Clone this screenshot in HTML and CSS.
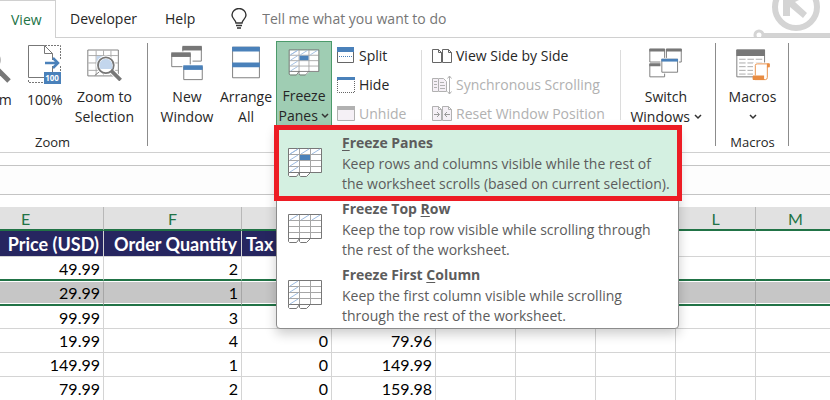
FILE: index.html
```html
<!DOCTYPE html>
<html lang="en">
	<head>
		<meta charset="UTF-8" />
		<meta name="viewport" content="width=device-width, initial-scale=1.0" />
		<title>Freeze Panes</title>
		<link rel="stylesheet" href="styles.css">
	</head>
	<body>
		<!-- shared icon parts -->
		<svg class="defs" width="0" height="0">
			<defs>
				<g id="grid">
					<path fill="#fff" d="M1 1h32v24h-10l-3 3h-7l-2-1-2 1H1z" />
					<path fill="none" stroke="#a6a6a6" d="M1 6.5h32M1 12.5h32M1 18.5h32M11.5 1v24M22.5 1v24" />
					<path fill="none" stroke="#777" d="M.5 .5h33v24H.5zM.5 24.5v3l1 1h7l3-4M11.5 24.5v3l1 1h6l4-4" />
				</g>
				<path id="hatch-row" stroke="#9dbbe0" d="M2 6l8-5M13 6l8-5M24 6l8-5" />
				<path id="hatch-col" stroke="#9dbbe0" d="M2 6l8-5M2 12l8-5M2 18l8-5M2 24l8-5" />
			</defs>
		</svg>

		<header class="tabs">
			<a href="#" class="tab active">View</a>
			<a href="#" class="tab">Developer</a>
			<a href="#" class="tab">Help</a>
			<label class="tell-me">
				<svg width="16" height="22" viewBox="0 0 16 22" fill="none" stroke="#333" stroke-width="1.4">
					<path d="M5 15c0-3-4-4-4-8a7 6.5 0 0 1 14 0c0 4-4 5-4 8zM5 17.5h6M6 20h4" />
				</svg>
				<input type="text" aria-label="Tell me" placeholder="Tell me what you want to do" />
			</label>
			<svg class="backdrop" width="80" height="37" viewBox="0 0 80 37" fill="#d4d4d4">
				<circle cx="46" cy="7" r="21" fill="none" stroke="#d4d4d4" stroke-width="6" />
				<path d="M33 0h16l-4 2 12 11-4 5-13-11v9h-7z" />
				<circle cx="9" cy="35" r="4" fill="none" stroke="#d4d4d4" stroke-width="3" />
				<path d="M14 33h66v4H14z" />
			</svg>
		</header>

		<div class="ribbon">
			<section class="group zoom-group">
				<div class="buttons">
					<button class="big">
						<svg width="40" height="40" viewBox="0 0 40 40" fill="none" stroke="#777">
							<circle cx="14" cy="16" r="12" stroke-width="3" />
							<path stroke-width="5" d="M24 25l12 12" />
						</svg>
						<span>Zoom</span>
					</button>
					<button class="big">
						<svg width="34" height="40" viewBox="0 0 34 40" fill="none">
							<path stroke="#777" stroke-dasharray="2 1" d="M17 1.5h15.500v26M.5 36v2.500h16" />
							<path fill="#fff" stroke="#777" d="M.5 1.500h16l8 8v24H.5zM16.500 1.500v8h8" />
							<path stroke="#fff" stroke-width="6" d="M18 19h15" />
							<path stroke="#4a81ba" stroke-width="2.500" d="M17 19h12M25 14l5 5-5 5" />
							<path fill="#4a81ba" d="M16 28h17v12H16z" />
							<text x="24" y="37" class="icon-text">100</text>
						</svg>
						<span>100%</span>
					</button>
					<button class="big">
						<svg width="38" height="40" viewBox="0 0 38 40" fill="none">
							<path fill="#fff" stroke="#777" d="M1.500 6.500h33v28h-33z" />
							<path stroke="#a6a6a6" d="M2 12.500h32M2 20.500h32M2 28.500h32M10.500 7v27M18.500 7v27M26.500 7v27" />
							<path fill="#c3d6ed" d="M11 13h7v8h-7z" />
							<path stroke="#777" d="M9 34l5-4" />
							<path stroke="#fff" stroke-width="6" d="M27 29l9 9" />
							<circle cx="21" cy="23" r="10.500" fill="#fff" />
							<circle cx="21" cy="23" r="8.500" fill="#fff" stroke="#777" stroke-width="2" />
							<path fill="#c3d6ed" d="M14 23a7 7 0 0 1 14 0v4H15z" />
							<path stroke="#777" stroke-width="4" d="M27 29l10 10" />
						</svg>
						<span>Zoom to<br />Selection</span>
					</button>
				</div>
				<div class="group-name">Zoom</div>
			</section>

			<section class="group window-group">
				<div class="buttons">
					<button class="big">
						<svg width="34" height="40" viewBox="0 0 34 40" fill="#fff">
							<path stroke="#777" d="M12.500 3.500h20v15h-20z" /><path fill="#777" d="M12 2h21v5H12z" />
							<path d="M0 8h23v18H0z" /><path stroke="#777" d="M.5 10.500h20v14H.5z" /><path fill="#777" d="M0 9h21v5H0z" />
							<path d="M12 22h22v18H12z" /><path stroke="#777" d="M13.500 24.500h20v14h-20z" /><path fill="#4a81ba" d="M13 23h21v5H13z" />
						</svg>
						<span>New<br />Window</span>
					</button>
					<button class="big">
						<svg width="30" height="40" viewBox="0 0 30 40">
							<path fill="#fff" stroke="#777" d="M.5 3.500h29v33H.5z" />
							<path fill="#4a81ba" d="M0 3h30v5H0zM0 20h30v5H0z" />
						</svg>
						<span>Arrange<br />All</span>
					</button>
					<div class="dropdown">
						<button class="big open" aria-expanded="true">
							<svg width="34" height="40" viewBox="0 -6 34 40">
								<use href="#grid" /><use href="#hatch-row" /><use href="#hatch-col" />
								<path fill="#4a81ba" d="M12 7h10v5H12z" />
							</svg>
							<span>Freeze<br />Panes <svg class="chevron" width="8" height="6"><path d="M1 1l3 3 3-3" /></svg></span>
						</button>
						<div class="menu" role="menu">
							<button class="menu-item current" role="menuitem">
								<svg width="34" height="30" viewBox="0 0 34 30">
									<use href="#grid" /><use href="#hatch-row" /><use href="#hatch-col" />
									<path fill="#4a81ba" d="M12 7h10v5H12z" />
								</svg>
								<span><strong><u>F</u>reeze Panes</strong>Keep rows and columns visible while the rest of<br />the worksheet scrolls (based on current selection).</span>
							</button>
							<button class="menu-item" role="menuitem">
								<svg width="34" height="30" viewBox="0 0 34 30"><use href="#grid" /><use href="#hatch-row" /></svg>
								<span><strong>Freeze Top <u>R</u>ow</strong>Keep the top row visible while scrolling through<br />the rest of the worksheet.</span>
							</button>
							<button class="menu-item" role="menuitem">
								<svg width="34" height="30" viewBox="0 0 34 30"><use href="#grid" /><use href="#hatch-col" /></svg>
								<span><strong>Freeze First <u>C</u>olumn</strong>Keep the first column visible while scrolling<br />through the rest of the worksheet.</span>
							</button>
						</div>
					</div>
					<div class="stack">
						<button class="small">
							<svg width="18" height="18" viewBox="0 0 18 18">
								<path fill="#fff" stroke="#666" d="M.5 1.500h16v14H.5z" /><path fill="#4a81ba" d="M0 0h17v5H0z" />
								<path stroke="#4a81ba" stroke-dasharray="1 1" d="M2 9.500h13" />
							</svg>
							Split
						</button>
						<button class="small">
							<svg width="18" height="18" viewBox="0 0 18 18">
								<path fill="none" stroke="#666" stroke-dasharray="1 1" d="M.5 4v12.500h17V4" /><path fill="#4a81ba" d="M0 1h18v3H0z" />
							</svg>
							Hide
						</button>
						<button class="small" disabled>
							<svg width="18" height="18" viewBox="0 0 18 18">
								<path fill="#f5f0f6" stroke="#b1b1b1" d="M.5 2.500h17v13H.5z" /><path fill="#b1b1b1" d="M0 1h18v4H0z" />
							</svg>
							Unhide
						</button>
					</div>
					<div class="stack wide">
						<button class="small">
							<svg width="20" height="20" viewBox="0 0 20 20" fill="#fff" stroke="#666">
								<path d="M.5 3.500h6l3 3v10h-9zM6.500 3.500v3h3M10.500 3.500h6l3 3v10h-9zM16.500 3.500v3h3" />
							</svg>
							View Side by Side
						</button>
						<button class="small" disabled>
							<svg width="20" height="20" viewBox="0 0 20 20" fill="#f5f0f6" stroke="#b1b1b1">
								<path d="M6 3.500H.5v13H6M2 6.500h3M2 9.500h3M2 12.500h3M6.500 3.500h5l3 3v10h-8zM8 7.500h4M8 10.500h5M8 13.500h5" />
								<path fill="none" d="M17.500 1v18M15.500 3.500l2-2.500 2 2.500M15.500 16.500l2 2.500 2-2.500" />
							</svg>
							Synchronous Scrolling
						</button>
						<button class="small" disabled>
							<svg width="20" height="20" viewBox="0 0 20 20" fill="#f5f0f6" stroke="#b1b1b1">
								<path d="M.5 2.500h6l3 3v11h-9zM6.500 2.500v3h3M10.500 2.500h6l3 3v11h-9zM16.500 2.500v3h3" />
								<path fill="none" stroke="#999" d="M2 10.500h5M5 8l2.500 2.500L5 13M18 10.500h-5M15 8l-2.500 2.500L15 13" />
							</svg>
							Reset Window Position
						</button>
					</div>
					<button class="big">
						<svg width="36" height="40" viewBox="0 0 36 40" fill="#fff">
							<path stroke="#777" d="M.5 5.500h16v14H.5zM18.500 5.500h16v14h-16zM.5 21.500h16v14H.5z" />
							<path fill="#777" d="M0 5h17v3H0zM18 5h17v3H18zM0 21h17v3H0z" />
							<path d="M12 15h20v17H12z" /><path stroke="#777" d="M13.500 16.500h17v14h-17z" /><path fill="#4a81ba" d="M13 16h18v3H13z" />
						</svg>
						<span>Switch<br />Windows <svg class="chevron" width="8" height="6"><path d="M1 1l3 3 3-3" /></svg></span>
					</button>
				</div>
			</section>

			<section class="group macros-group">
				<div class="buttons">
					<button class="big">
						<svg width="36" height="40" viewBox="0 0 36 40">
							<path fill="#fff" stroke="#777" d="M.5 6.500h30v29H.5z" /><path fill="#777" d="M0 6h31v7H0z" />
							<path stroke="#a6a6a6" stroke-dasharray="7 2" d="M3 16.500h25M3 20.500h25M3 24.500h25M3 28.500h25M3 32.500h25" />
							<path fill="#fff" d="M18 20h18v20H18z" />
							<path fill="#fff" stroke="#e88c42" d="M20.500 34V23q0-1.500 2-1.500h13v3h-2V36q0 2.500-2 2.500H20" />
							<path fill="#e88c42" d="M18 34h12v5H18q-1-2.500 0-5zM33 21h3v4h-3z" />
						</svg>
						<span>Macros<br /><svg class="chevron" width="8" height="6"><path d="M1 1l3 3 3-3" /></svg></span>
					</button>
				</div>
				<div class="group-name">Macros</div>
			</section>
		</div>

		<div class="formula-bar"></div>

		<div class="sheet">
			<table>
				<colgroup>
					<col class="col-price" /><col class="col-qty" /><col class="col-tax" /><col class="col-total" />
					<col /><col /><col /><col /><col />
				</colgroup>
				<thead>
					<tr>
						<th>E</th><th>F</th><th></th><th></th><th></th><th></th><th></th><th>L</th><th>M</th>
					</tr>
				</thead>
				<tbody>
					<tr class="titles">
						<th>Price (USD)</th><th>Order Quantity</th><th class="left">Tax</th><th></th><td></td><td></td><td></td><td></td><td></td>
					</tr>
					<tr class="above-selected">
						<td>49.99</td><td>2</td><td></td><td></td><td></td><td></td><td></td><td></td><td></td>
					</tr>
					<tr class="selected">
						<td>29.99</td><td>1</td><td></td><td></td><td></td><td></td><td></td><td></td><td></td>
					</tr>
					<tr class="below-selected">
						<td>99.99</td><td>3</td><td></td><td></td><td></td><td></td><td></td><td></td><td></td>
					</tr>
					<tr>
						<td>19.99</td><td>4</td><td>0</td><td>79.96</td><td></td><td></td><td></td><td></td><td></td>
					</tr>
					<tr>
						<td>149.99</td><td>1</td><td>0</td><td>149.99</td><td></td><td></td><td></td><td></td><td></td>
					</tr>
					<tr>
						<td>79.99</td><td>2</td><td>0</td><td>159.98</td><td></td><td></td><td></td><td></td><td></td>
					</tr>
				</tbody>
			</table>
		</div>
	</body>
</html>
```

FILE: styles.css
```css
* {
	box-sizing: border-box;
}
body {
	margin: 0;
	background: #fff;
	color: #262626;
	font-family: "Open Sans", "Segoe UI", sans-serif;
	font-size: 14px;
	line-height: 20px;
	overflow: hidden;
}
button,
input {
	font: inherit;
	color: inherit;
	background: none;
	border: 0;
	padding: 0;
	margin: 0;
}
.defs {
	position: absolute;
}

/* tab strip */
.tabs {
	position: relative;
	display: flex;
	height: 38px;
	border-bottom: 1px solid #d0d0d0;
}
.tab {
	display: flex;
	align-items: center;
	padding: 0 14px;
	color: #262626;
	text-decoration: none;
}
.tab.active {
	width: 56px;
	height: 38px;
	padding: 0 0 0 11px;
	border-top: 1px solid #d0d0d0;
	border-right: 1px solid #d0d0d0;
	background: #fff;
	color: #217346;
}
.tell-me {
	display: flex;
	align-items: center;
	gap: 15px;
	margin-left: 22px;
}
.tell-me input {
	width: 220px;
}
.tell-me input::placeholder {
	color: #767676;
	opacity: 1;
}
.backdrop {
	position: absolute;
	top: 0;
	right: 0;
}

/* ribbon */
.ribbon {
	display: flex;
	height: 115px;
	padding: 3px 0 4px;
	border-bottom: 1px solid #d0d0d0;
}
.group {
	display: flex;
	flex-direction: column;
	justify-content: space-between;
	position: relative;
	flex: none;
}
.group::after {
	content: "";
	position: absolute;
	top: 2px;
	bottom: 2px;
	right: 0;
	border-right: 1px solid #8c8c8c;
}
.zoom-group {
	width: 191px;
	margin-left: -43px;
}
.window-group {
	width: 568px;
	padding-left: 10px;
}
.macros-group {
	width: 73px;
}
.buttons {
	display: flex;
	justify-content: center;
}
.group-name {
	font-size: 13px;
	line-height: 12px;
	text-align: center;
}
.big {
	display: flex;
	flex-direction: column;
	align-items: center;
	gap: 6px;
	height: 86px;
	padding-top: 3px;
	flex: none;
	white-space: nowrap;
}
.zoom-group .buttons {
	justify-content: flex-end;
	gap: 8px;
	padding-right: 14px;
}
.zoom-group .big {
	min-width: 44px;
}
.window-group .big {
	width: 60px;
}
.window-group .big:first-child {
	width: 58px;
}
.window-group .big:last-child {
	flex: 1;
	padding-right: 5px;
}
.window-group .buttons {
	justify-content: flex-start;
}
.icon-text {
	font: bold 8px "Open Sans", sans-serif;
	fill: #fff;
	text-anchor: middle;
}
.chevron {
	vertical-align: 2px;
	fill: none;
	stroke: #333;
	stroke-width: 1.5;
}
.dropdown {
	position: relative;
}
.window-group .dropdown .big {
	width: 56px;
	padding: 2px 0 0;
	border: 1px solid #4c9a6b;
	background: #9fcdb3;
}
.stack {
	position: relative;
	display: flex;
	flex-direction: column;
	width: 90px;
	padding-left: 5px;
}
.stack.wide {
	width: 199px;
	padding-left: 10px;
}
.stack::after {
	content: "";
	position: absolute;
	top: 9px;
	bottom: 8px;
	right: 0;
	border-right: 1px solid #dcdcdc;
}
.small {
	display: flex;
	align-items: center;
	gap: 4px;
	height: 29px;
	white-space: nowrap;
}
.small:disabled {
	color: #b1b1b1;
}

/* open drop-down */
.menu {
	position: absolute;
	top: 84px;
	left: 0;
	z-index: 1;
	width: 403px;
	padding-top: 4px;
	border: 1px solid #8c8c8c;
	border-radius: 4px;
	background: #fff;
	color: #5c5c5c;
	box-shadow: 0 5px 12px rgba(0, 0, 0, 0.2);
}
.menu-item {
	display: flex;
	align-items: center;
	gap: 20px;
	width: 100%;
	height: 66px;
	padding-left: 11px;
	text-align: left;
	white-space: nowrap;
}
.menu-item.current {
	width: auto;
	margin-left: 2px;
	padding-left: 9px;
	padding-right: 7px;
	background: #d4f0e1;
	outline: 5px solid #ed1c24;
}
.menu-item strong {
	display: block;
	line-height: 22px;
}
.menu-item u {
	text-underline-offset: 2px;
}

.formula-bar {
	height: 30px;
	margin: 12px 0;
	border-top: 1px solid #c4c4c4;
	border-bottom: 1px solid #c4c4c4;
	background: #fdfdfd;
}

/* worksheet */
.sheet {
	overflow: hidden;
}
table {
	width: 888px;
	margin-left: -52px;
	table-layout: fixed;
	border-spacing: 0;
	color: #000;
	font-family: Lato, Calibri, sans-serif;
	font-size: 16px;
}
col {
	width: 80px;
}
.col-price {
	width: 156px;
}
.col-qty {
	width: 138px;
}
.col-tax {
	width: 90px;
}
.col-total {
	width: 104px;
}
td,
th {
	height: 24px;
	padding: 1px 3px 0;
	border-right: 1px solid #d4d4d4;
	border-bottom: 1px solid #d4d4d4;
	line-height: 20px;
	text-align: right;
	white-space: nowrap;
}
thead th {
	border-right-color: #b8b8b8;
	border-bottom: 2px solid #217346;
	background: #e1e1e1;
	color: #217346;
	font-weight: normal;
	text-align: center;
}
.titles th,
.titles td {
	height: 26px;
}
.titles th {
	padding: 1px 4px 0;
	background: #262660;
	color: #fff;
	font-size: 18px;
}
.titles .left {
	text-align: left;
}
.above-selected td {
	border-bottom: 2px solid #217346;
}
.selected td {
	height: 25px;
	padding-top: 0;
	border-top: 1px solid #fff;
	border-right-color: #a6a6a6;
	border-bottom: 2px solid #217346;
	background: #c6c6c6;
	box-shadow: inset 0 -1px #fff;
}
.below-selected td {
	height: 23px;
}
```
